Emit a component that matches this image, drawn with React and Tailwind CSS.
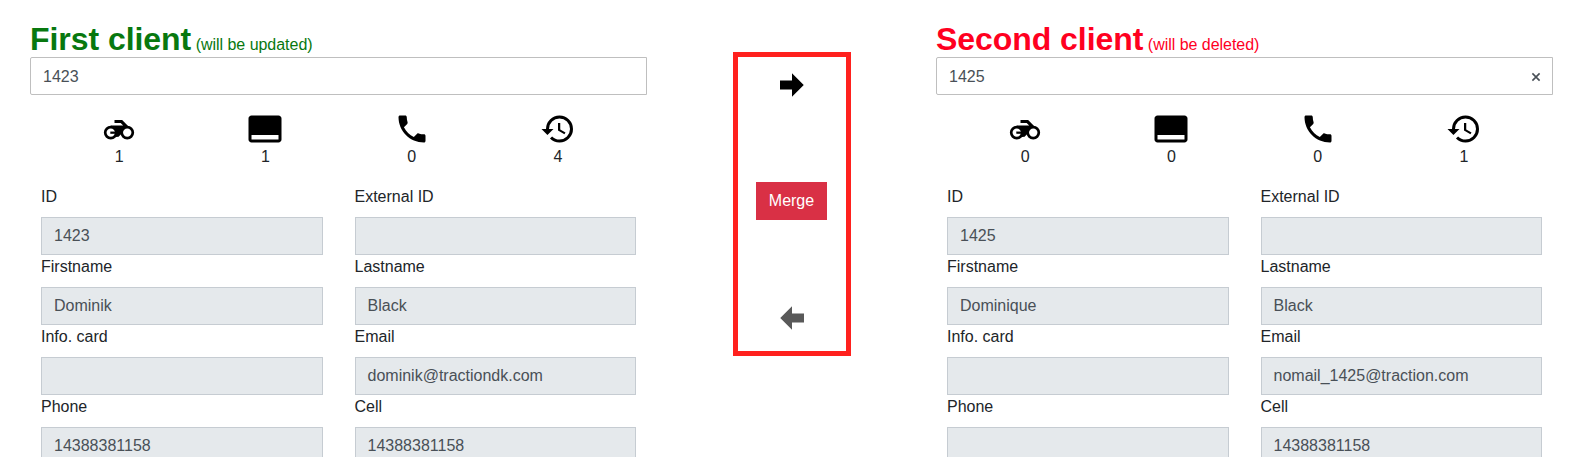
import React from 'react';

const icons = {
  card: 'M21 3H3c-1.1 0-2 .9-2 2v14c0 1.1.9 2 2 2h18c1.1 0 2-.9 2-2V5c0-1.1-.9-2-2-2zm0 16H3v-3h18v3z',
  phone: 'M6.62 10.79c1.44 2.83 3.76 5.14 6.59 6.59l2.2-2.2c.27-.27.67-.36 1.02-.24 1.12.37 2.33.57 3.57.57.55 0 1 .45 1 1V20c0 .55-.45 1-1 1-9.39 0-17-7.61-17-17 0-.55.45-1 1-1h3.5c.55 0 1 .45 1 1 0 1.25.2 2.45.57 3.57.11.35.03.74-.25 1.02l-2.2 2.2z',
  history: 'M13.5 8H12v5l4.28 2.54.72-1.21-3.5-2.08V8M13 3a9 9 0 0 0-9 9H1l3.96 4.03L9 12H6a7 7 0 0 1 7-7 7 7 0 0 1 7 7 7 7 0 0 1-7 7c-1.93 0-3.68-.79-4.94-2.06l-1.42 1.42C8.27 20 10.5 21 13 21a9 9 0 0 0 9-9 9 9 0 0 0-9-9',
  right: 'M4 15V9h8V4.16L19.84 12 12 19.84V15H4z',
  left: 'M20 9v6h-8v4.84L4.16 12 12 4.16V9h8z',
};

const clients = [
  {
    title: 'First client',
    note: '(will be updated)',
    color: 'text-[#08780f]',
    search: '1423',
    clearable: false,
    counts: [1, 1, 0, 4],
    fields: [
      ['ID', '1423'],
      ['External ID', ''],
      ['Firstname', 'Dominik'],
      ['Lastname', 'Black'],
      ['Info. card', ''],
      ['Email', 'dominik@tractiondk.com'],
      ['Phone', '14388381158'],
      ['Cell', '14388381158'],
    ],
  },
  {
    title: 'Second client',
    note: '(will be deleted)',
    color: 'text-[#ff001f]',
    search: '1425',
    clearable: true,
    counts: [0, 0, 0, 1],
    fields: [
      ['ID', '1425'],
      ['External ID', ''],
      ['Firstname', 'Dominique'],
      ['Lastname', 'Black'],
      ['Info. card', ''],
      ['Email', 'nomail_1425@traction.com'],
      ['Phone', ''],
      ['Cell', '14388381158'],
    ],
  },
];

function Icon({ name, className = '' }) {
  return (
    <svg viewBox="0 0 24 24" className={`w-9 h-9 fill-current ${className}`}>
      <path d={icons[name]} />
    </svg>
  );
}

function MotorcycleIcon() {
  return (
    <svg viewBox="0 0 24 24" className="w-9 h-9 fill-current">
      {/* Wheels */}
      <circle cx="6.5" cy="14.4" r="3.7" fill="none" stroke="currentColor" strokeWidth="1.8" />
      <circle cx="17.5" cy="14.4" r="3.7" fill="none" stroke="currentColor" strokeWidth="1.8" />
      {/* Handlebar, frame and axle */}
      <path d="M9 6h5.1l3.8 3.8v.8c-2 .3-3.6 2-3.6 3.9l-2.6 2.6-1.7.3-.2-1.8c.7-1.5.6-2.9-.3-4-.6-.8-1.6-1.3-3-1.3v-.6h8.3L13.1 8H9z" />
      <path d="M6.2 13.7h4.6v1.5H6.2z" />
    </svg>
  );
}

function ClientPanel({ client }) {
  return (
    <section className="w-[617px] shrink-0">
      <h2 className={`h-[38px] leading-10 whitespace-nowrap ${client.color}`}>
        <span className="text-[32px] font-bold tracking-[-0.05px]">{client.title}</span>{' '}
        <small className="text-base tracking-[-0.03px]">{client.note}</small>
      </h2>

      <div className="h-[38px] pt-px flex items-center justify-between pl-3 pr-[11px] border border-[#bfbfbf] rounded-l-xs text-[#495057]">
        <span>{client.search}</span>
        {client.clearable && (
          <button>
            <svg viewBox="0 0 10 10" className="w-2.5 h-2.5 stroke-current stroke-[1.6]">
              <path d="M1.4 1.4l7.2 7.2M8.6 1.4L1.4 8.6" />
            </svg>
          </button>
        )}
      </div>

      {/* Counters */}
      <div className="grid grid-cols-4 px-4 mt-4 text-black">
        {['motorcycle', 'card', 'phone', 'history'].map((name, i) => (
          <div key={name} className="flex flex-col items-center">
            {name === 'motorcycle' ? <MotorcycleIcon /> : <Icon name={name} />}
            <span className="leading-[19px] text-[#212529]">{client.counts[i]}</span>
          </div>
        ))}
      </div>

      {/* Fields */}
      <div className="grid grid-cols-2 gap-x-8 px-[11px] mt-[19px]">
        {client.fields.map(([label, value]) => (
          <div key={label}>
            <label className="block h-8 leading-6 text-[#212529]">{label}</label>
            <div className="h-[38px] px-3 leading-9 bg-[#e5e9ec] border border-[#c6ccd2] text-[#495057]">{value}</div>
          </div>
        ))}
      </div>
    </section>
  );
}

export default function App() {
  return (
    <div className="h-[457px] overflow-hidden bg-white pl-[30px] pt-[19px] flex items-start font-['Liberation_Sans',Arial,sans-serif] text-base">
      <ClientPanel client={clients[0]} />

      <div className="w-[118px] h-[304px] shrink-0 mt-[33px] ml-[86px] mr-[85px] pt-[9.5px] pr-px pb-[15.5px] border-5 border-[#ff211e] flex flex-col items-center justify-between">
        <button><Icon name="right" className="text-black" /></button>
        <button className="w-[71px] h-[38px] bg-[#d93045] text-white">Merge</button>
        <button><Icon name="left" className="text-[#595959]" /></button>
      </div>

      <ClientPanel client={clients[1]} />
    </div>
  );
}
